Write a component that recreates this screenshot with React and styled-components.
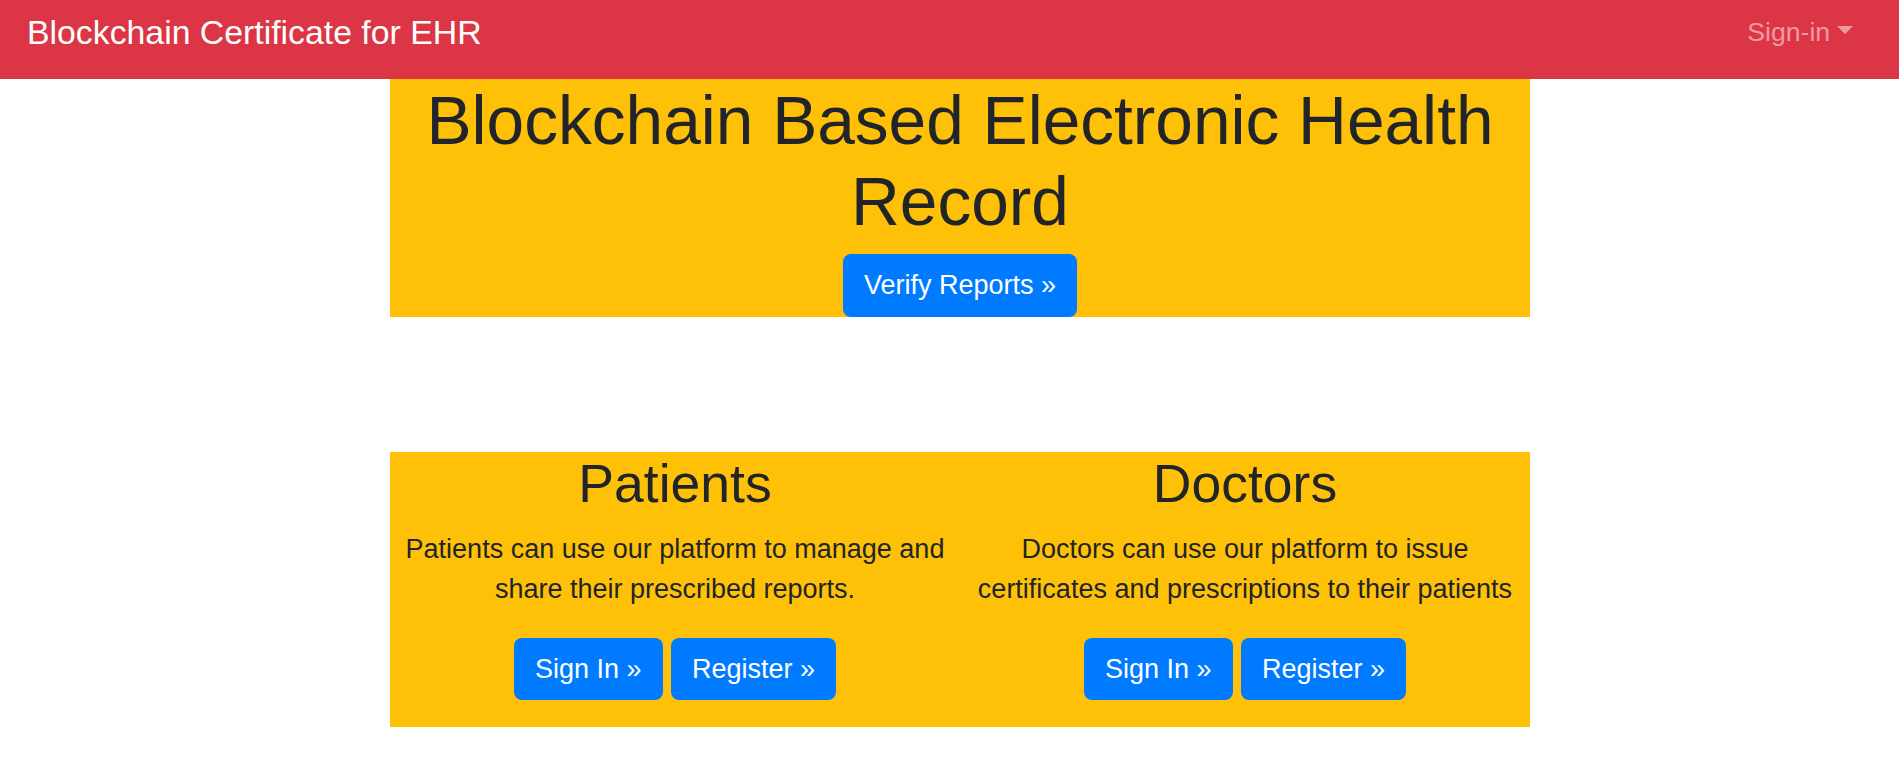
import React from 'react'
import styled, { createGlobalStyle } from 'styled-components'

const GlobalStyle = createGlobalStyle`
  * { box-sizing: border-box; }
  body {
    margin: 0;
    background: #fff;
    color: #212529;
    font-family: "Liberation Sans", Arial, Helvetica, sans-serif;
  }
`

const Navbar = styled.nav`
  display: flex;
  align-items: flex-start;
  justify-content: space-between;
  height: 79px;
  padding: 7px 46px 0 27px;
  background: #dc3545;
`

const Brand = styled.a`
  color: #fff;
  font-size: 33.8px;
  line-height: 50px;
  text-decoration: none;
`

const DropdownToggle = styled.a`
  margin-top: 5px;
  color: rgba(255, 255, 255, 0.5);
  font-size: 26.67px;
  line-height: 1.5;
  text-decoration: none;
  &::after {
    content: "";
    display: inline-block;
    margin-left: 0.255em;
    vertical-align: 0.255em;
    border-top: 0.3em solid;
    border-right: 0.3em solid transparent;
    border-left: 0.3em solid transparent;
  }
`

const Main = styled.main`
  padding-left: 21px;
`

const Panel = styled.section`
  max-width: 1140px;
  margin: 0 auto ${p => p.$gap || 0}px;
  background: #ffc107;
  text-align: center;
`

const Hero = styled(Panel)`
  padding: 1px 15px 0;
`

const HeroTitle = styled.h1`
  margin: 0 0 12px;
  font-size: 67.6px;
  font-weight: 300;
  line-height: 1.2;
`

const Columns = styled(Panel)`
  display: grid;
  grid-template-columns: 1fr 1fr;
  padding-bottom: 27px;
`

const Column = styled.div`
  padding: 0 15px;
`

const ColumnTitle = styled.h2`
  margin: 0 0 13px;
  font-size: 53.5px;
  font-weight: 400;
  line-height: 1.2;
`

const Lead = styled.p`
  margin: 0 0 28px;
  font-size: 27px;
  line-height: 1.5;
`

const ButtonRow = styled.div`
  display: flex;
  justify-content: center;
  gap: 8px;
`

const Button = styled.a`
  display: inline-block;
  padding: 11px 21.3px;
  border-radius: 8px;
  background: #007bff;
  color: #fff;
  font-size: 27px;
  line-height: 1.5;
  text-decoration: none;
`

const roles = [
  {
    title: 'Patients',
    text: 'Patients can use our platform to manage and share their prescribed reports.',
  },
  {
    title: 'Doctors',
    text: 'Doctors can use our platform to issue certificates and prescriptions to their patients',
  },
]

export default function App() {
  return (
    <>
      <GlobalStyle />
      <Navbar>
        <Brand href="#">Blockchain Certificate for EHR</Brand>
        <DropdownToggle href="#">Sign-in</DropdownToggle>
      </Navbar>
      <Main>
        <Hero $gap={135}>
          <HeroTitle>Blockchain Based Electronic Health Record</HeroTitle>
          <Button href="#">Verify Reports &raquo;</Button>
        </Hero>
        <Columns>
          {roles.map(role => (
            <Column key={role.title}>
              <ColumnTitle>{role.title}</ColumnTitle>
              <Lead>{role.text}</Lead>
              <ButtonRow>
                <Button href="#">Sign In &raquo;</Button>
                <Button href="#">Register &raquo;</Button>
              </ButtonRow>
            </Column>
          ))}
        </Columns>
      </Main>
    </>
  )
}
